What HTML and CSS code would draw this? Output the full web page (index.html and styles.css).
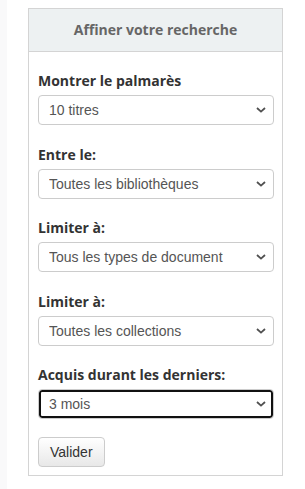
FILE: index.html
```html
<!DOCTYPE html>
<html lang="fr">

<head>
    <meta charset="UTF-8">
    <meta name="viewport" content="width=device-width, initial-scale=1.0">
    <title>Affiner votre recherche</title>
    <link rel="stylesheet" href="styles.css">
</head>

<body>
    <div class="page">
        <div class="rail"></div>

        <aside class="sidebar">
            <div class="panel">
                <div class="panel-heading">Affiner votre recherche</div>

                <form class="panel-body">
                    <div class="form-group">
                        <label for="limit">Montrer le palmarès</label>
                        <select id="limit">
                            <option>10 titres</option>
                            <option>15 titres</option>
                            <option>20 titres</option>
                        </select>
                    </div>

                    <div class="form-group">
                        <label for="branch">Entre le:</label>
                        <select id="branch">
                            <option>Toutes les bibliothèques</option>
                        </select>
                    </div>

                    <div class="form-group">
                        <label for="itemtype">Limiter à:</label>
                        <select id="itemtype">
                            <option>Tous les types de document</option>
                        </select>
                    </div>

                    <div class="form-group">
                        <label for="ccode">Limiter à:</label>
                        <select id="ccode">
                            <option>Toutes les collections</option>
                        </select>
                    </div>

                    <div class="form-group">
                        <label for="timeLimit">Acquis durant les derniers:</label>
                        <select id="timeLimit" class="is-focused">
                            <option>3 mois</option>
                            <option>6 mois</option>
                            <option>12 mois</option>
                        </select>
                    </div>

                    <button type="submit" class="btn">Valider</button>
                </form>
            </div>
        </aside>
    </div>
</body>

</html>
```

FILE: styles.css
```css
body {
    margin: 0;
    padding: 0;
    background-color: #fff;
    font-family: 'Open Sans', 'Liberation Sans', sans-serif;
}

.page {
    display: flex;
    min-height: 489px;
}

.rail {
    width: 7px;
    background-color: #f9f9fa;
}

.sidebar {
    padding: 8px 0 0 21px;
}

.panel {
    width: 255px;
    box-sizing: border-box;
    border: 1px solid #d4d4d4;
}

.panel-heading {
    height: 42px;
    line-height: 41px;
    text-align: center;
    background-color: #edf1f2;
    border-bottom: 1px solid #d4d4d4;
    color: #666;
    font-size: 14px;
    font-weight: bold;
}

.panel-body {
    margin: 0;
    padding: 19px 8px 8px 9px;
}

.form-group {
    margin-bottom: 19.5px;
}

.form-group:last-of-type {
    margin-bottom: 18px;
}

label {
    display: block;
    height: 20px;
    line-height: 20px;
    margin-bottom: 4px;
    color: #333;
    font-size: 14px;
    font-weight: bold;
}

select {
    display: block;
    width: 100%;
    height: 30px;
    box-sizing: border-box;
    padding: 0 24px 0 10px;
    border: 1px solid #ccc;
    border-radius: 4px;
    background-color: #fff;
    background-image: url("data:image/svg+xml,%3Csvg xmlns='http://www.w3.org/2000/svg' width='10' height='6' viewBox='0 0 10 6'%3E%3Cpath d='M1 1l4 3.6L9 1' fill='none' stroke='%23505050' stroke-width='1.8'/%3E%3C/svg%3E");
    background-repeat: no-repeat;
    background-position: right 7px center;
    -webkit-appearance: none;
    appearance: none;
    color: #555;
    font-family: 'Liberation Sans', Arial, sans-serif;
    font-size: 14px;
}

select.is-focused {
    box-shadow: inset 0 0 0 2px #111;
    outline: none;
}

.btn {
    display: block;
    height: 30px;
    padding: 0 11px;
    border: 1px solid #ccc;
    border-radius: 4px;
    background: linear-gradient(#fff, #e8e8e8);
    color: #333;
    font-family: 'Liberation Sans', Arial, sans-serif;
    font-size: 14px;
    cursor: pointer;
}
```
